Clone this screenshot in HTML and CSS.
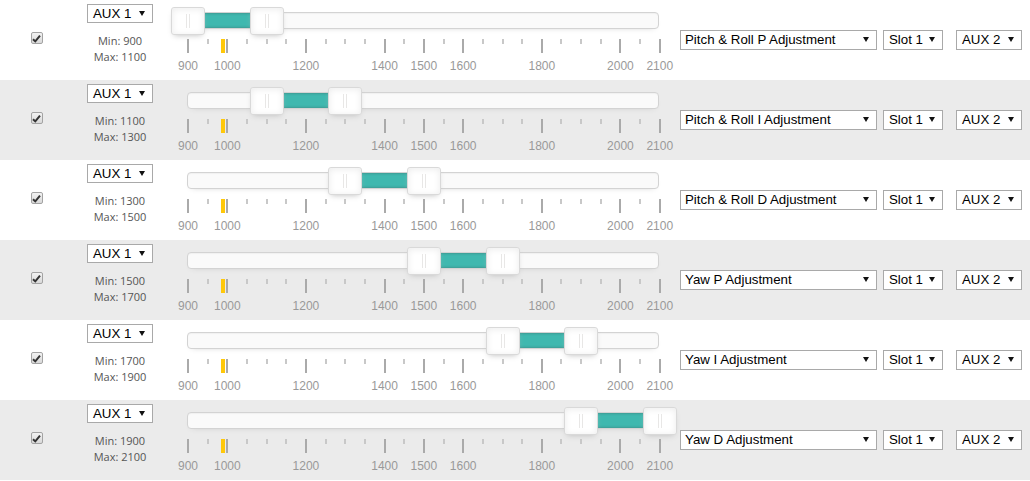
FILE: index.html
```html
<!DOCTYPE html>
<html>
<head>
<meta charset="utf-8">
<link rel="stylesheet" href="styles.css">
</head>
<body>
<div class="adjustments">

  <div class="row">
    <div class="col-check"><span class="checkbox"><svg width="9" height="9" viewBox="0 0 9 9"><path d="M1 5.2 L3.3 7.4 L8 1.6" fill="none" stroke="#333" stroke-width="2"/></svg></span></div>
    <div class="col-channel">
      <div class="select sel-channel"><span>AUX 1</span><i class="caret"></i></div>
      <div class="range-text">Min: 900<br>Max: 1100</div>
    </div>
    <div class="col-range">
      <div class="slider">
        <div class="track"><div class="connect" style="left:0%;right:83.333%"></div></div>
        <div class="handle" style="left:0%"></div>
        <div class="handle" style="left:16.667%"></div>
        <div class="pips">
          <span class="pip big"><b>900</b></span><span class="pip"></span><span class="pip big"><b>1000</b></span><span class="pip"></span><span class="pip"></span><span class="pip"></span><span class="pip big"><b>1200</b></span><span class="pip"></span><span class="pip"></span><span class="pip"></span><span class="pip big"><b>1400</b></span><span class="pip"></span><span class="pip big"><b>1500</b></span><span class="pip"></span><span class="pip big"><b>1600</b></span><span class="pip"></span><span class="pip"></span><span class="pip"></span><span class="pip big"><b>1800</b></span><span class="pip"></span><span class="pip"></span><span class="pip"></span><span class="pip big"><b>2000</b></span><span class="pip"></span><span class="pip big"><b>2100</b></span>
          <span class="marker"></span>
        </div>
      </div>
    </div>
    <div class="col-func">
      <div class="select sel-func"><span>Pitch &amp; Roll P Adjustment</span><i class="caret"></i></div>
      <div class="select sel-slot"><span>Slot 1</span><i class="caret"></i></div>
      <div class="select sel-aux"><span>AUX 2</span><i class="caret"></i></div>
    </div>
  </div>

  <div class="row alt">
    <div class="col-check"><span class="checkbox"><svg width="9" height="9" viewBox="0 0 9 9"><path d="M1 5.2 L3.3 7.4 L8 1.6" fill="none" stroke="#333" stroke-width="2"/></svg></span></div>
    <div class="col-channel">
      <div class="select sel-channel"><span>AUX 1</span><i class="caret"></i></div>
      <div class="range-text">Min: 1100<br>Max: 1300</div>
    </div>
    <div class="col-range">
      <div class="slider">
        <div class="track"><div class="connect" style="left:16.667%;right:66.667%"></div></div>
        <div class="handle" style="left:16.667%"></div>
        <div class="handle" style="left:33.333%"></div>
        <div class="pips">
          <span class="pip big"><b>900</b></span><span class="pip"></span><span class="pip big"><b>1000</b></span><span class="pip"></span><span class="pip"></span><span class="pip"></span><span class="pip big"><b>1200</b></span><span class="pip"></span><span class="pip"></span><span class="pip"></span><span class="pip big"><b>1400</b></span><span class="pip"></span><span class="pip big"><b>1500</b></span><span class="pip"></span><span class="pip big"><b>1600</b></span><span class="pip"></span><span class="pip"></span><span class="pip"></span><span class="pip big"><b>1800</b></span><span class="pip"></span><span class="pip"></span><span class="pip"></span><span class="pip big"><b>2000</b></span><span class="pip"></span><span class="pip big"><b>2100</b></span>
          <span class="marker"></span>
        </div>
      </div>
    </div>
    <div class="col-func">
      <div class="select sel-func"><span>Pitch &amp; Roll I Adjustment</span><i class="caret"></i></div>
      <div class="select sel-slot"><span>Slot 1</span><i class="caret"></i></div>
      <div class="select sel-aux"><span>AUX 2</span><i class="caret"></i></div>
    </div>
  </div>

  <div class="row">
    <div class="col-check"><span class="checkbox"><svg width="9" height="9" viewBox="0 0 9 9"><path d="M1 5.2 L3.3 7.4 L8 1.6" fill="none" stroke="#333" stroke-width="2"/></svg></span></div>
    <div class="col-channel">
      <div class="select sel-channel"><span>AUX 1</span><i class="caret"></i></div>
      <div class="range-text">Min: 1300<br>Max: 1500</div>
    </div>
    <div class="col-range">
      <div class="slider">
        <div class="track"><div class="connect" style="left:33.333%;right:50%"></div></div>
        <div class="handle" style="left:33.333%"></div>
        <div class="handle" style="left:50%"></div>
        <div class="pips">
          <span class="pip big"><b>900</b></span><span class="pip"></span><span class="pip big"><b>1000</b></span><span class="pip"></span><span class="pip"></span><span class="pip"></span><span class="pip big"><b>1200</b></span><span class="pip"></span><span class="pip"></span><span class="pip"></span><span class="pip big"><b>1400</b></span><span class="pip"></span><span class="pip big"><b>1500</b></span><span class="pip"></span><span class="pip big"><b>1600</b></span><span class="pip"></span><span class="pip"></span><span class="pip"></span><span class="pip big"><b>1800</b></span><span class="pip"></span><span class="pip"></span><span class="pip"></span><span class="pip big"><b>2000</b></span><span class="pip"></span><span class="pip big"><b>2100</b></span>
          <span class="marker"></span>
        </div>
      </div>
    </div>
    <div class="col-func">
      <div class="select sel-func"><span>Pitch &amp; Roll D Adjustment</span><i class="caret"></i></div>
      <div class="select sel-slot"><span>Slot 1</span><i class="caret"></i></div>
      <div class="select sel-aux"><span>AUX 2</span><i class="caret"></i></div>
    </div>
  </div>

  <div class="row alt">
    <div class="col-check"><span class="checkbox"><svg width="9" height="9" viewBox="0 0 9 9"><path d="M1 5.2 L3.3 7.4 L8 1.6" fill="none" stroke="#333" stroke-width="2"/></svg></span></div>
    <div class="col-channel">
      <div class="select sel-channel"><span>AUX 1</span><i class="caret"></i></div>
      <div class="range-text">Min: 1500<br>Max: 1700</div>
    </div>
    <div class="col-range">
      <div class="slider">
        <div class="track"><div class="connect" style="left:50%;right:33.333%"></div></div>
        <div class="handle" style="left:50%"></div>
        <div class="handle" style="left:66.667%"></div>
        <div class="pips">
          <span class="pip big"><b>900</b></span><span class="pip"></span><span class="pip big"><b>1000</b></span><span class="pip"></span><span class="pip"></span><span class="pip"></span><span class="pip big"><b>1200</b></span><span class="pip"></span><span class="pip"></span><span class="pip"></span><span class="pip big"><b>1400</b></span><span class="pip"></span><span class="pip big"><b>1500</b></span><span class="pip"></span><span class="pip big"><b>1600</b></span><span class="pip"></span><span class="pip"></span><span class="pip"></span><span class="pip big"><b>1800</b></span><span class="pip"></span><span class="pip"></span><span class="pip"></span><span class="pip big"><b>2000</b></span><span class="pip"></span><span class="pip big"><b>2100</b></span>
          <span class="marker"></span>
        </div>
      </div>
    </div>
    <div class="col-func">
      <div class="select sel-func"><span>Yaw P Adjustment</span><i class="caret"></i></div>
      <div class="select sel-slot"><span>Slot 1</span><i class="caret"></i></div>
      <div class="select sel-aux"><span>AUX 2</span><i class="caret"></i></div>
    </div>
  </div>

  <div class="row">
    <div class="col-check"><span class="checkbox"><svg width="9" height="9" viewBox="0 0 9 9"><path d="M1 5.2 L3.3 7.4 L8 1.6" fill="none" stroke="#333" stroke-width="2"/></svg></span></div>
    <div class="col-channel">
      <div class="select sel-channel"><span>AUX 1</span><i class="caret"></i></div>
      <div class="range-text">Min: 1700<br>Max: 1900</div>
    </div>
    <div class="col-range">
      <div class="slider">
        <div class="track"><div class="connect" style="left:66.667%;right:16.667%"></div></div>
        <div class="handle" style="left:66.667%"></div>
        <div class="handle" style="left:83.333%"></div>
        <div class="pips">
          <span class="pip big"><b>900</b></span><span class="pip"></span><span class="pip big"><b>1000</b></span><span class="pip"></span><span class="pip"></span><span class="pip"></span><span class="pip big"><b>1200</b></span><span class="pip"></span><span class="pip"></span><span class="pip"></span><span class="pip big"><b>1400</b></span><span class="pip"></span><span class="pip big"><b>1500</b></span><span class="pip"></span><span class="pip big"><b>1600</b></span><span class="pip"></span><span class="pip"></span><span class="pip"></span><span class="pip big"><b>1800</b></span><span class="pip"></span><span class="pip"></span><span class="pip"></span><span class="pip big"><b>2000</b></span><span class="pip"></span><span class="pip big"><b>2100</b></span>
          <span class="marker"></span>
        </div>
      </div>
    </div>
    <div class="col-func">
      <div class="select sel-func"><span>Yaw I Adjustment</span><i class="caret"></i></div>
      <div class="select sel-slot"><span>Slot 1</span><i class="caret"></i></div>
      <div class="select sel-aux"><span>AUX 2</span><i class="caret"></i></div>
    </div>
  </div>

  <div class="row alt">
    <div class="col-check"><span class="checkbox"><svg width="9" height="9" viewBox="0 0 9 9"><path d="M1 5.2 L3.3 7.4 L8 1.6" fill="none" stroke="#333" stroke-width="2"/></svg></span></div>
    <div class="col-channel">
      <div class="select sel-channel"><span>AUX 1</span><i class="caret"></i></div>
      <div class="range-text">Min: 1900<br>Max: 2100</div>
    </div>
    <div class="col-range">
      <div class="slider">
        <div class="track"><div class="connect" style="left:83.333%;right:0%"></div></div>
        <div class="handle" style="left:83.333%"></div>
        <div class="handle" style="left:100%"></div>
        <div class="pips">
          <span class="pip big"><b>900</b></span><span class="pip"></span><span class="pip big"><b>1000</b></span><span class="pip"></span><span class="pip"></span><span class="pip"></span><span class="pip big"><b>1200</b></span><span class="pip"></span><span class="pip"></span><span class="pip"></span><span class="pip big"><b>1400</b></span><span class="pip"></span><span class="pip big"><b>1500</b></span><span class="pip"></span><span class="pip big"><b>1600</b></span><span class="pip"></span><span class="pip"></span><span class="pip"></span><span class="pip big"><b>1800</b></span><span class="pip"></span><span class="pip"></span><span class="pip"></span><span class="pip big"><b>2000</b></span><span class="pip"></span><span class="pip big"><b>2100</b></span>
          <span class="marker"></span>
        </div>
      </div>
    </div>
    <div class="col-func">
      <div class="select sel-func"><span>Yaw D Adjustment</span><i class="caret"></i></div>
      <div class="select sel-slot"><span>Slot 1</span><i class="caret"></i></div>
      <div class="select sel-aux"><span>AUX 2</span><i class="caret"></i></div>
    </div>
  </div>

</div>
</body>
</html>
```

FILE: styles.css
```css
* { box-sizing: border-box; }

html, body {
  margin: 0;
  padding: 0;
  background: #fff;
}

body {
  font-family: "Liberation Sans", Arial, sans-serif;
  font-size: 13px;
  color: #000;
}

.adjustments {
  display: flex;
  flex-direction: column;
}

.row {
  display: flex;
  height: 80px;
  background: #fff;
}

.row.alt {
  background: #ebebeb;
}

/* checkbox column */
.col-check {
  width: 72px;
  display: flex;
  justify-content: center;
  padding-top: 32px;
  padding-left: 1px;
}

.checkbox {
  width: 12px;
  height: 12px;
  border: 1px solid #a3a3a3;
  border-radius: 2px;
  background: linear-gradient(#f2f2f2, #d9d9d9);
  display: flex;
  align-items: center;
  justify-content: center;
}

.checkbox svg {
  display: block;
}

/* channel column */
.col-channel {
  width: 96px;
  display: flex;
  flex-direction: column;
  align-items: center;
  padding-top: 4px;
}

.select {
  display: flex;
  align-items: center;
  justify-content: space-between;
  height: 20px;
  padding: 0 7px 0 4px;
  background: #fff;
  border: 1px solid #a9a9a9;
  font-family: "Liberation Sans", Arial, sans-serif;
  font-size: 13.3px;
  color: #000;
  white-space: nowrap;
}

.caret {
  width: 0;
  height: 0;
  border-left: 3px solid transparent;
  border-right: 3px solid transparent;
  border-top: 5px solid #111;
}

.sel-channel {
  width: 66px;
  height: 19px;
  padding-left: 5px;
}

.range-text {
  margin-top: 10px;
  font-family: "Open Sans", "Liberation Sans", sans-serif;
  font-size: 11px;
  line-height: 16px;
  color: #555;
  text-align: center;
}

/* range column */
.col-range {
  width: 512px;
  padding-left: 19px;
}

.slider {
  position: relative;
  width: 472px;
  padding-top: 12px;
}

.track {
  position: relative;
  height: 17px;
  background: #fafafa;
  border: 1px solid #d3d3d3;
  border-radius: 4px;
  box-shadow: inset 0 1px 1px #f0f0f0, 0 3px 6px -5px #bbb;
}

.connect {
  position: absolute;
  top: 0;
  bottom: 0;
  background: #3fb8af;
  box-shadow: inset 0 0 3px rgba(51, 51, 51, 0.45);
}

.handle {
  position: absolute;
  top: 7px;
  width: 34px;
  height: 28px;
  margin-left: -16px;
  background: #fff;
  border: 1px solid #d9d9d9;
  border-radius: 3px;
  box-shadow: inset 0 0 1px #fff, inset 0 1px 7px #ebebeb, 0 3px 6px -3px #bbb;
}

.handle::before,
.handle::after {
  content: "";
  position: absolute;
  top: 6px;
  left: 14px;
  width: 1px;
  height: 14px;
  background: #e8e7e6;
}

.handle::after {
  left: 17px;
}

.pips {
  position: relative;
  display: flex;
  justify-content: space-between;
  align-items: flex-start;
  width: 474px;
  height: 14px;
  margin-top: 10px;
}

.pip {
  position: relative;
  width: 2px;
  height: 5px;
  background: #c8c8c8;
}

.pip.big {
  height: 14px;
  background: #aaa;
}

.pip b {
  position: absolute;
  top: 20px;
  left: 50%;
  transform: translateX(-50%);
  font-family: "Liberation Sans", Arial, sans-serif;
  font-weight: normal;
  font-size: 12px;
  line-height: 14px;
  color: #999;
}

.marker {
  position: absolute;
  top: 0;
  left: 34px;
  width: 4px;
  height: 14px;
  background: #ffc80a;
}

/* function column */
.col-func {
  display: flex;
  align-items: center;
  padding-bottom: 1px;
}

.sel-func {
  width: 197px;
  margin-right: 6px;
}

.sel-slot {
  width: 60px;
  margin-right: 13px;
  padding-left: 5px;
}

.sel-aux {
  width: 66px;
  padding-left: 5px;
}
```
